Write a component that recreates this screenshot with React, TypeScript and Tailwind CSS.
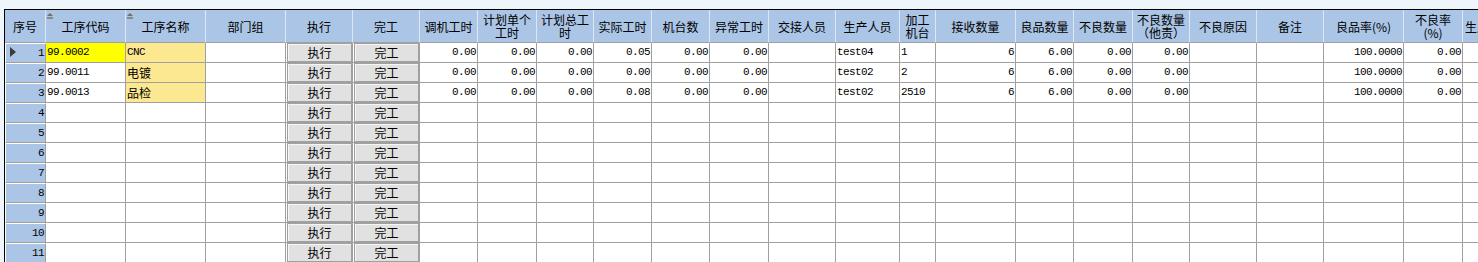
import React from 'react';

type Col = { w: string; h: string[]; a: 'l' | 'r' | 'b'; sort?: boolean };

const cols: Col[] = [
  { w: 'w-[80px]', h: ['工序代码'], a: 'l', sort: true },
  { w: 'w-[80px]', h: ['工序名称'], a: 'l', sort: true },
  { w: 'w-[80px]', h: ['部门组'], a: 'l' },
  { w: 'w-[67px]', h: ['执行'], a: 'b' },
  { w: 'w-[67px]', h: ['完工'], a: 'b' },
  { w: 'w-[58px]', h: ['调机工时'], a: 'r' },
  { w: 'w-[59px]', h: ['计划单个', '工时'], a: 'r' },
  { w: 'w-[57px]', h: ['计划总工', '时'], a: 'r' },
  { w: 'w-[58px]', h: ['实际工时'], a: 'r' },
  { w: 'w-[58px]', h: ['机台数'], a: 'r' },
  { w: 'w-[59px]', h: ['异常工时'], a: 'r' },
  { w: 'w-[67px]', h: ['交接人员'], a: 'l' },
  { w: 'w-[64px]', h: ['生产人员'], a: 'l' },
  { w: 'w-[36px]', h: ['加工', '机台'], a: 'l' },
  { w: 'w-[80px]', h: ['接收数量'], a: 'r' },
  { w: 'w-[58px]', h: ['良品数量'], a: 'r' },
  { w: 'w-[59px]', h: ['不良数量'], a: 'r' },
  { w: 'w-[57px]', h: ['不良数量', '（他责）'], a: 'r' },
  { w: 'w-[67px]', h: ['不良原因'], a: 'l' },
  { w: 'w-[67px]', h: ['备注'], a: 'l' },
  { w: 'w-[80px]', h: ['良品率(%)'], a: 'r' },
  { w: 'w-[59px]', h: ['不良率', '(%)'], a: 'r' },
  { w: 'w-[80px]', h: ['生产日期'], a: 'l' },
];

const filled: string[][] = [
  ['99.0002', 'CNC', '', '执行', '完工', '0.00', '0.00', '0.00', '0.05', '0.00', '0.00', '', 'test04', '1', '6', '6.00', '0.00', '0.00', '', '', '100.0000', '0.00', ''],
  ['99.0011', '电镀', '', '执行', '完工', '0.00', '0.00', '0.00', '0.00', '0.00', '0.00', '', 'test02', '2', '6', '6.00', '0.00', '0.00', '', '', '100.0000', '0.00', ''],
  ['99.0013', '品检', '', '执行', '完工', '0.00', '0.00', '0.00', '0.08', '0.00', '0.00', '', 'test02', '2510', '6', '6.00', '0.00', '0.00', '', '', '100.0000', '0.00', ''],
];

const emptyRow = cols.map((c, i) => (i === 3 ? '执行' : i === 4 ? '完工' : ''));
const rows: string[][] = Array.from({ length: 11 }, (_, i) => (i < 3 ? filled[i] : emptyRow));

const cjk = "font-['Noto_Sans_CJK_SC',sans-serif] text-[12px]";
const mono = "font-['Liberation_Mono','Noto_Sans_CJK_SC',monospace] text-[11px] tracking-[-0.6px]";

function cellBg(r: number, c: number) {
  if (r === 0 && c === 0) return 'bg-[#ffff00]';
  if (r < 3 && c === 1) return 'bg-[#fbe890]';
  return 'bg-white';
}

function SortMark() {
  return (
    <svg className="absolute left-[1px] top-[3px]" width="6" height="6" viewBox="0 0 6 6">
      <polygon points="3,0 6,3 0,3" fill="#6e6e6e" />
      <rect x="0" y="4" width="6" height="2" fill="#8a8a8a" />
    </svg>
  );
}

export default function App() {
  return (
    <div className="h-[262px] w-[1478px] overflow-hidden bg-[#eef6fc] pl-[4px] pt-[9px] text-black">
      <div className="w-max border-l border-t border-black bg-white">
        {/* header */}
        <div className={`flex h-[33px] ${cjk}`}>
          <div className="flex w-[41px] shrink-0 items-center justify-center border-b border-r border-b-[#a0a0a0] border-r-[#dfe6ef] bg-[#abc5e6] leading-[13px]">
            序号
          </div>
          {cols.map((c, i) => (
            <div
              key={i}
              className={`${c.w} relative flex shrink-0 items-center justify-center overflow-hidden whitespace-nowrap border-b border-r border-b-[#a0a0a0] border-r-[#dfe6ef] bg-[#abc5e6] text-center leading-[13px]`}
            >
              {c.sort && <SortMark />}
              <div className={i === cols.length - 1 ? 'w-full pl-[2px] text-left' : ''}>
                {c.h.map((l, k) => (
                  <div key={k}>{l}</div>
                ))}
              </div>
            </div>
          ))}
        </div>
        {/* rows */}
        {rows.map((row, r) => (
          <div key={r} className="flex h-[20px]">
            <div className={`relative flex w-[41px] shrink-0 items-center justify-end border-b border-l border-r border-t border-b-[#a0a0a0] border-l-white border-r-[#a0a0a0] border-t-white bg-[#abc5e6] pr-[1px] ${mono}`}>
              {r === 0 && (
                <svg className="absolute left-[4px] top-[3px]" width="6" height="10" viewBox="0 0 6 10">
                  <polygon points="0,0 6,5 0,10" fill="#3c3c3c" />
                </svg>
              )}
              {r + 1}
            </div>
            {cols.map((c, i) => {
              const v = row[i];
              if (c.a === 'b') {
                return (
                  <div key={i} className={`${c.w} flex h-full shrink-0 border-b border-r border-[#a0a0a0] bg-white pl-[1px]`}>
                    <div className="flex h-[19px] flex-1 items-center justify-center border border-[#a0a0a0] bg-[#e1e1e1] shadow-[inset_1px_1px_0_#f6f6f6]">
                      <span className={`leading-[13px] ${cjk}`}>{v}</span>
                    </div>
                  </div>
                );
              }
              const isCjk = /[\u4e00-\u9fff]/.test(v);
              return (
                <div
                  key={i}
                  className={`${c.w} flex h-full shrink-0 items-center overflow-hidden whitespace-nowrap border-b border-r border-[#a0a0a0] px-[1px] ${cellBg(r, i)} ${c.a === 'r' ? 'justify-end' : 'justify-start'} ${isCjk ? cjk : mono}`}
                >
                  {v}
                </div>
              );
            })}
          </div>
        ))}
      </div>
    </div>
  );
}
